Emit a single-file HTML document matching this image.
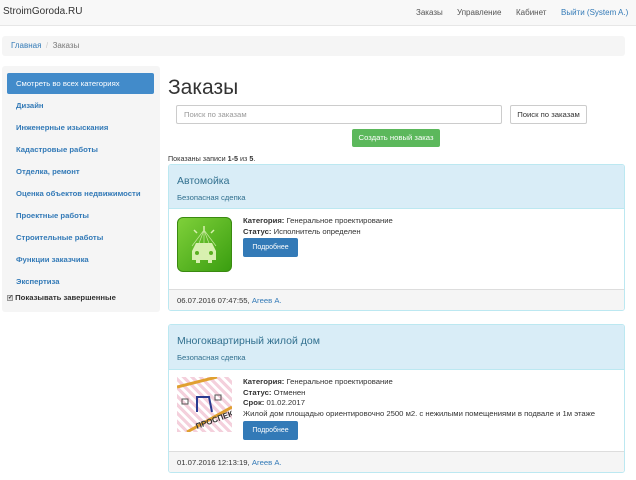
<!DOCTYPE html><html><head><meta charset="utf-8"><style>
*{box-sizing:border-box}body{margin:0;width:636px;height:480px;overflow:hidden;font-family:"Liberation Sans",sans-serif;font-size:8px;color:#333;background:#fff;position:relative}
.a{position:absolute}
.nav{left:0;top:0;width:636px;height:26px;background:#f8f8f8;border-bottom:1px solid #e7e7e7}
.nav span{position:absolute;top:8px;font-size:8px;color:#555}
.side a{position:absolute;left:14px;color:#337ab7;font-weight:bold;font-size:7.7px;text-decoration:none}
.panel{left:168px;width:457px;border:1px solid #bce8f1;border-radius:3px;background:#fff;overflow:hidden}
.ph{background:#d9edf7;border-bottom:1px solid #bce8f1;position:relative}
.pf{background:#f5f5f5;border-top:1px solid #ddd;position:absolute;left:0;right:0;bottom:0;height:21px;padding:6px 0 0 8px;font-size:7.7px;color:#333}
.btn{position:absolute;background:#337ab7;color:#fff;border-radius:2px;font-size:7px;text-align:center;width:55px;height:19px;line-height:19px;left:74px}
.txt{position:absolute;left:74px;font-size:7.7px;line-height:10.5px;color:#333}
</style></head><body>
<div class="a nav"><span style="left:3px;top:6px;font-size:10px;color:#333">StroimGoroda.RU</span><span style="left:416px">Заказы</span><span style="left:457px">Управление</span><span style="left:516px">Кабинет</span><span style="left:561px;color:#337ab7">Выйти (System A.)</span></div>
<div class="a" style="left:2px;top:36px;width:623px;height:20px;background:#f5f5f5;border-radius:3px;font-size:8px;padding:5px 9px"><span style="color:#337ab7">Главная</span> <span style="color:#ccc">&nbsp;/&nbsp;</span> <span style="color:#777">Заказы</span></div>
<div class="a side" style="left:2px;top:66px;width:158px;height:246px;background:#f5f5f5;border-radius:3px">
<div class="a" style="left:5px;top:7px;width:147px;height:21px;background:#428bca;border-radius:2px;color:#fff;font-size:7.7px;padding:6px 9px">Смотреть во всех категориях</div>
<a style="top:35px">Дизайн</a><a style="top:57px">Инженерные изыскания</a><a style="top:79px">Кадастровые работы</a><a style="top:101px">Отделка, ремонт</a><a style="top:123px">Оценка объектов недвижимости</a><a style="top:145px">Проектные работы</a><a style="top:167px">Строительные работы</a><a style="top:189px">Функции заказчика</a><a style="top:211px">Экспертиза</a>
<div class="a" style="left:5px;top:227px;font-size:7.7px;font-weight:bold;color:#333"><span style="display:inline-block;width:6px;height:6px;border:1px solid #999;background:#ddd;font-size:6px;line-height:5px;vertical-align:middle">✓</span> Показывать завершенные</div></div>
<div class="a" style="left:168px;top:76px;font-size:21px;color:#333">Заказы</div>
<div class="a" style="left:176px;top:105px;width:326px;height:19px;border:1px solid #ccc;border-radius:2px;font-size:7.7px;color:#999;padding:4px 7px">Поиск по заказам</div>
<div class="a" style="left:510px;top:105px;width:77px;height:19px;border:1px solid #ccc;border-radius:2px;font-size:7.7px;color:#333;text-align:center;line-height:17px">Поиск по заказам</div>
<div class="a" style="left:352px;top:129px;width:88px;height:18px;background:#5cb85c;border-radius:2px;font-size:7.7px;color:#fff;text-align:center;line-height:18px">Создать новый заказ</div>
<div class="a" style="left:168px;top:154px;font-size:7.2px">Показаны записи <b>1-5</b> из <b>5</b>.</div>
<div class="a panel" style="top:164px;height:147px">
<div class="ph" style="height:44px"><div class="a" style="left:8px;top:10px;font-size:10.5px;color:#31708f">Автомойка</div><div class="a" style="left:8px;top:28px;font-size:7.7px;color:#31708f">Безопасная сдепка</div></div>
<div class="a" style="left:8px;top:52px;width:55px;height:55px;border-radius:6px;background:linear-gradient(135deg,#7fd03a,#3a9e10);border:1px solid #3a8a10"><svg width="53" height="53"><path d="M26 8v5M16 12l3 3M36 12l-3 3" stroke="#d8f0b0" stroke-width="1.5"/><path d="M26 12l-12 16M26 12l12 16M26 12v16M26 12l-6 16M26 12l6 16" stroke="#c8e8a0" stroke-width="0.7"/><path d="M14 42v-9l4-8h16l4 8v9h-4v3h-4v-3h-8v3h-4v-3z" fill="#d8f0b0"/><circle cx="19" cy="35" r="2" fill="#5ab020"/><circle cx="33" cy="35" r="2" fill="#5ab020"/></svg></div>
<div class="txt" style="top:51px"><b>Категория:</b> Генеральное проектирование<br><b>Статус:</b> Исполнитель определен</div>
<div class="btn" style="top:73px">Подробнее</div>
<div class="pf">06.07.2016 07:47:55, <span style="color:#337ab7">Агеев А.</span></div></div>
<div class="a panel" style="top:324px;height:149px">
<div class="ph" style="height:45px"><div class="a" style="left:8px;top:10px;font-size:10.5px;color:#31708f">Многоквартирный жилой дом</div><div class="a" style="left:8px;top:28px;font-size:7.7px;color:#31708f">Безопасная сдепка</div></div>
<div class="a" style="left:8px;top:52px;width:55px;height:55px;background:repeating-linear-gradient(45deg,#f4d0dc 0 3px,#fff 3px 6px)"><svg width="55" height="55"><path d="M0 10L40 0M10 55L55 30" stroke="#e0a030" stroke-width="3"/><path d="M20 35V20h12l3 15" stroke="#2a3a90" stroke-width="2" fill="none"/><rect x="5" y="22" width="6" height="5" fill="none" stroke="#555"/><rect x="38" y="18" width="6" height="5" fill="none" stroke="#555"/><text x="20" y="52" font-size="8" font-weight="bold" fill="#333" transform="rotate(-20 20 52)">ПРОСПЕКТ</text></svg></div>
<div class="txt" style="top:52px"><b>Категория:</b> Генеральное проектирование<br><b>Статус:</b> Отменен<br><b>Срок:</b> 01.02.2017<br>Жилой дом площадью ориентировочно 2500 м2. с нежилыми помещениями в подвале и 1м этаже</div>
<div class="btn" style="top:96px">Подробнее</div>
<div class="pf">01.07.2016 12:13:19, <span style="color:#337ab7">Агеев А.</span></div></div>
</body></html>
